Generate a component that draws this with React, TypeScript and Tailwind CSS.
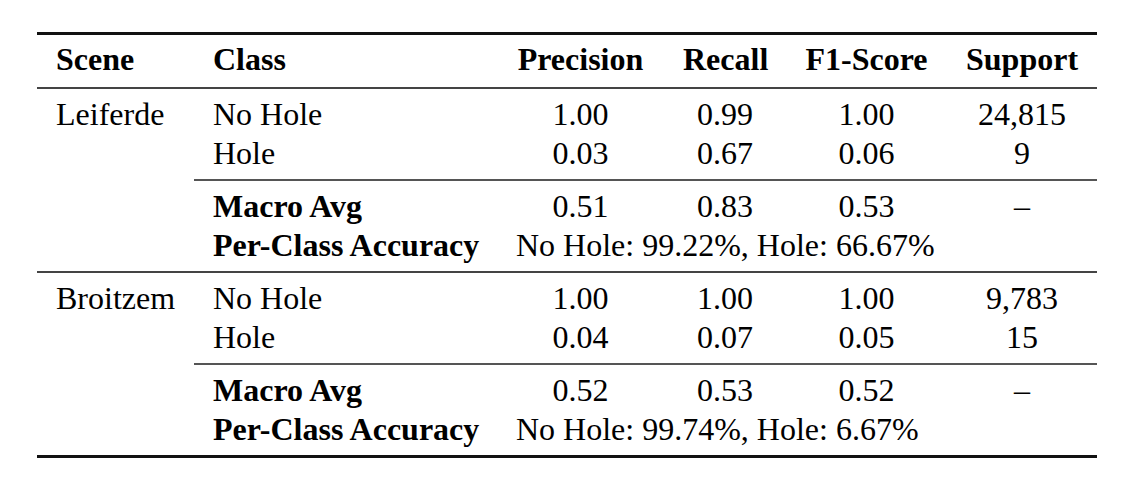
const cols = 'grid grid-cols-[157px_303px_167px_122px_161px_150px]';

type Row = {
  scene?: string;
  cls: string;
  bold?: boolean;
  p?: string;
  r?: string;
  f?: string;
  s?: string;
  span?: string;
};

const Cell = ({ children, center }: { children?: React.ReactNode; center?: boolean }) => (
  <div className={`px-[19px] whitespace-nowrap ${center ? 'text-center' : 'text-left'}`}>{children}</div>
);

const Rows = ({ rows }: { rows: Row[] }) => (
  <div className={`${cols} py-[6px]`}>
    {rows.map((row, i) =>
      row.span ? (
        <div key={i} className="contents">
          <Cell>{row.scene}</Cell>
          <Cell>
            <span className={row.bold ? 'font-bold' : ''}>{row.cls}</span>
          </Cell>
          <div className="col-span-3 px-[19px] whitespace-nowrap">{row.span}</div>
          <Cell />
        </div>
      ) : (
        <div key={i} className="contents">
          <Cell>{row.scene}</Cell>
          <Cell>
            <span className={row.bold ? 'font-bold' : ''}>{row.cls}</span>
          </Cell>
          <Cell center>{row.p}</Cell>
          <Cell center>{row.r}</Cell>
          <Cell center>{row.f}</Cell>
          <Cell center>{row.s}</Cell>
        </div>
      )
    )}
  </div>
);

const HeavyRule = () => <div className="h-[3px] bg-[#111]" />;
const LightRule = () => <div className="h-[2px] bg-[#444]" />;
const PartRule = () => <div className="ml-[157px] h-[2px] bg-[#555]" />;

export default function App() {
  return (
    <div className="w-[1132px] h-[500px] bg-white text-black text-[32px] leading-[39px] font-['Liberation_Serif','Times_New_Roman',serif]">
      <div className="ml-[37px] w-[1060px] pt-[32px]">
        <HeavyRule />
        <div className={`${cols} pt-[5px] pb-[8px] font-bold`}>
          <Cell>Scene</Cell>
          <Cell>Class</Cell>
          <Cell center>Precision</Cell>
          <Cell center>Recall</Cell>
          <Cell center>F1-Score</Cell>
          <Cell center>Support</Cell>
        </div>
        <LightRule />
        <Rows
          rows={[
            { scene: 'Leiferde', cls: 'No Hole', p: '1.00', r: '0.99', f: '1.00', s: '24,815' },
            { cls: 'Hole', p: '0.03', r: '0.67', f: '0.06', s: '9' },
          ]}
        />
        <PartRule />
        <Rows
          rows={[
            { cls: 'Macro Avg', bold: true, p: '0.51', r: '0.83', f: '0.53', s: '–' },
            { cls: 'Per-Class Accuracy', bold: true, span: 'No Hole: 99.22%, Hole: 66.67%' },
          ]}
        />
        <LightRule />
        <Rows
          rows={[
            { scene: 'Broitzem', cls: 'No Hole', p: '1.00', r: '1.00', f: '1.00', s: '9,783' },
            { cls: 'Hole', p: '0.04', r: '0.07', f: '0.05', s: '15' },
          ]}
        />
        <PartRule />
        <Rows
          rows={[
            { cls: 'Macro Avg', bold: true, p: '0.52', r: '0.53', f: '0.52', s: '–' },
            { cls: 'Per-Class Accuracy', bold: true, span: 'No Hole: 99.74%, Hole: 6.67%' },
          ]}
        />
        <HeavyRule />
      </div>
    </div>
  );
}
